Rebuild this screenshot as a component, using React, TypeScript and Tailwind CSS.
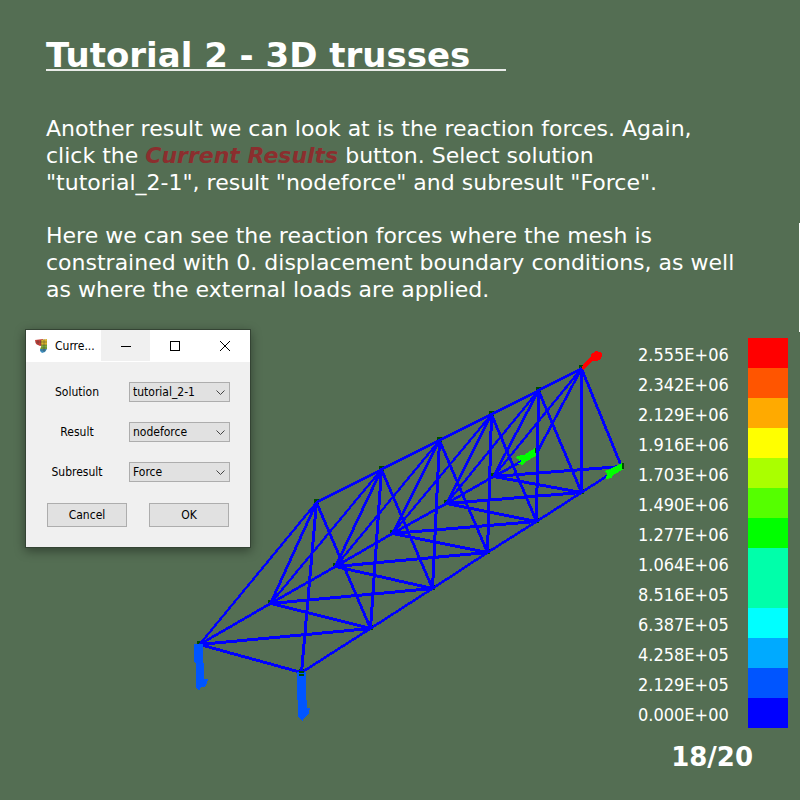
import React from "react";

type Point = [number, number];

const top: Point[] = [
  [316, 502], [381, 469], [439, 440], [491, 414], [538, 390], [581, 368],
];
const left: Point[] = [
  [199, 644], [270, 603], [335, 566], [392, 533], [446, 503], [493, 476], [536, 453],
];
const right: Point[] = [
  [301, 672], [370, 628], [432, 588], [487, 552], [536, 521], [581, 492], [621, 466],
];

const members: [Point, Point][] = [[left[0], right[0]]];
top.forEach((t, i) => {
  if (i > 0) members.push([top[i - 1], t]);
  members.push([t, left[i]], [t, left[i + 1]], [t, right[i]], [t, right[i + 1]]);
  members.push([left[i], left[i + 1]], [right[i], right[i + 1]], [left[i], right[i + 1]]);
  if (i > 0) members.push([left[i], right[i]]);
});

const legend: { value: string; color: string }[] = [
  { value: "2.555E+06", color: "bg-[#ff0000]" },
  { value: "2.342E+06", color: "bg-[#ff5500]" },
  { value: "2.129E+06", color: "bg-[#ffaa00]" },
  { value: "1.916E+06", color: "bg-[#ffff00]" },
  { value: "1.703E+06", color: "bg-[#aaff00]" },
  { value: "1.490E+06", color: "bg-[#55ff00]" },
  { value: "1.277E+06", color: "bg-[#00ff00]" },
  { value: "1.064E+06", color: "bg-[#00ffaa]" },
  { value: "8.516E+05", color: "bg-[#00ffaa]" },
  { value: "6.387E+05", color: "bg-[#00ffff]" },
  { value: "4.258E+05", color: "bg-[#00aaff]" },
  { value: "2.129E+05", color: "bg-[#0055ff]" },
  { value: "0.000E+00", color: "bg-[#0000ff]" },
];

const fields = [
  { id: "solution", label: "Solution", value: "tutorial_2-1" },
  { id: "result", label: "Result", value: "nodeforce" },
  { id: "subresult", label: "Subresult", value: "Force" },
];

function Truss() {
  return (
    <svg
      className="h-[400px] w-[630px] shrink-0"
      viewBox="0 329 630 400"
      shapeRendering="crispEdges"
      role="img"
      aria-label="Truss with reaction forces"
    >
      {[...top, ...left.slice(0, 6), ...right].map(([x, y]) => (
        <rect key={`${x}-${y}`} x={x - 2} y={y - 3} width="5" height="5" fill="#004b00" />
      ))}
      <g transform="translate(0.5 0.5)" stroke="#0000ff">
        {members.map(([a, b], i) => {
          const dx = Math.abs(a[0] - b[0]);
          const dy = Math.abs(a[1] - b[1]);
          return (
            <line
              key={i}
              x1={a[0]}
              y1={a[1]}
              x2={b[0]}
              y2={b[1]}
              strokeWidth={(3 * Math.max(dx, dy)) / Math.hypot(dx, dy)}
            />
          );
        })}
      </g>
      <path fill="#ff0000" d="M583 364L591 356L592 353L594 353L595 351L600 352L602 354L602 356L600 360L596 361L592 361L584 370L582 369Z" />
      <path fill="#0055ff" d="M194 644H203V663H204V679H208L207 683L205 687H201L199 691L196 687V663H195V662H194Z" />
      <path fill="#0055ff" d="M297 672H306V700H307V708H310L309 713L306 717L304 718L303 721L298 717V700H297Z" />
      <path fill="#00ff00" d="M515 457L519 456L521 455L524 455L535 448L536 456L525 462L523 465L518 464L517 462L520 460Z" />
      <path fill="#00ff00" d="M604 471L608 470L610 469L622 463L624 469L613 475L612 478L606 479L607 474Z" />
      <path stroke="#0000ff" strokeWidth="2" d="M517 463L521 461" />
      <path fill="#004b00" d="M299 671H304V673H299ZM299 674H304V676H299ZM622 464H624V469H622ZM535 448H536V453H535Z" />
    </svg>
  );
}

function AppIcon() {
  return (
    <svg className="mr-[5px] h-4 w-4 shrink-0" viewBox="0 0 16 16" aria-hidden="true">
      <path d="M1 2L9 1V7L6 8L2 6Z" fill="#c8403c" />
      <path d="M7 2L13 1V9L7 10Z" fill="#d8b52c" />
      <path d="M8 7H13V11H6Z" fill="#7fae3c" />
      <path d="M6 11H13L11 14L8 15L6 13Z" fill="#3f8fc0" />
      <path d="M1 4H13M4 2V7M7 2V8M10 1V14M7 7H13M7 10H13M7 12H12" stroke="#3b4030" strokeOpacity=".6" strokeWidth=".7" fill="none" />
    </svg>
  );
}

function ResultsDialog() {
  return (
    <section
      aria-label="Current Results"
      className="absolute top-0 left-[25px] w-[226px] border border-[#344434] bg-[#f0f0f0] text-[12px] leading-4 text-black shadow-[0_3px_10px_rgba(0,0,0,0.4)] [font-family:'DejaVu_Sans_Condensed','DejaVu_Sans',sans-serif]"
    >
      <header className="flex h-8 bg-white">
        <div className="flex min-w-0 flex-1 items-center pl-2">
          <AppIcon />
          <span>Curre...</span>
        </div>
        <button aria-label="Minimize" className="grid h-[31px] w-[49px] place-items-center bg-[#f0f0f0]">
          <svg className="h-[10px] w-[10px]" viewBox="0 0 10 10" stroke="#000" shapeRendering="crispEdges"><path d="M0 5.5H10" /></svg>
        </button>
        <button aria-label="Maximize" className="grid h-[31px] w-[50px] place-items-center">
          <svg className="h-[10px] w-[10px]" viewBox="0 0 10 10" stroke="#000" fill="none" shapeRendering="crispEdges"><path d="M.5 .5H9.5V9.5H.5Z" /></svg>
        </button>
        <button aria-label="Close" className="grid h-[31px] w-[50px] place-items-center">
          <svg className="h-[10px] w-[10px]" viewBox="0 0 10 10" stroke="#000"><path d="M0 0L10 10M10 0L0 10" /></svg>
        </button>
      </header>
      <form className="p-5" onSubmit={(e) => e.preventDefault()}>
        <div className="grid gap-5">
          {fields.map((f) => (
            <div key={f.id} className="flex items-center justify-between pl-[1px]">
              <label htmlFor={f.id} className="w-[60px] text-center">{f.label}</label>
              <div className="relative w-[101px]">
                <select id={f.id} className="block h-5 w-full appearance-none border border-[#adadad] bg-[#e1e1e1] pl-[3px] leading-[18px]">
                  <option>{f.value}</option>
                </select>
                <svg className="pointer-events-none absolute top-2 right-[5px] h-[6px] w-[9px]" viewBox="0 0 9 6" fill="none" stroke="#444"><path d="M.5 .5L4.5 4.5L8.5 .5" /></svg>
              </div>
            </div>
          ))}
        </div>
        <div className="mt-[21px] flex justify-between px-[1px]">
          <button className="h-6 w-20 border border-[#adadad] bg-[#e1e1e1]">Cancel</button>
          <button className="h-6 w-20 border border-[#adadad] bg-[#e1e1e1]">OK</button>
        </div>
      </form>
    </section>
  );
}

export default function App() {
  return (
    <main className="relative min-h-screen bg-[#546e53] pt-[41px] text-white [font-family:'DejaVu_Sans',sans-serif]">
      <div className="absolute top-[223px] right-0 h-[109px] w-px bg-white" />
      <div className="pr-[60px] pl-[46px]">
        <h1 className="max-w-[460px] border-b-2 border-[#e9ece9] text-[34px] leading-[28px] font-bold whitespace-nowrap">
          Tutorial 2 - 3D trusses
        </h1>
        <div className="mt-11 grid gap-[26px] text-[22px] leading-[27px]">
          <p>
            Another result we can look at is the reaction forces. Again, click the{" "}
            <strong className="text-[#8b2e2e] italic">Current Results</strong> button. Select solution{" "}
            <span className="whitespace-nowrap">"tutorial_2-1",</span> result "nodeforce" and subresult "Force".
          </p>
          <p>
            Here we can see the reaction forces where the mesh is constrained with 0. displacement
            boundary conditions, as well as where the external loads are applied.
          </p>
        </div>
      </div>
      <div className="relative mt-[26px] flex justify-between pr-3">
        <Truss />
        <ul className="w-[150px] pt-[9px] text-[18px] leading-[26px] [font-family:'DejaVu_Sans_Condensed','DejaVu_Sans',sans-serif]">
          {legend.map((row) => (
            <li key={row.value} className="flex h-[30px] items-end justify-between">
              <span>{row.value}</span>
              <span className={`h-[30px] w-10 ${row.color}`} />
            </li>
          ))}
        </ul>
        <ResultsDialog />
      </div>
      <footer className="mt-3 pr-[47px] text-right text-[26px] leading-8 font-bold">18/20</footer>
    </main>
  );
}
